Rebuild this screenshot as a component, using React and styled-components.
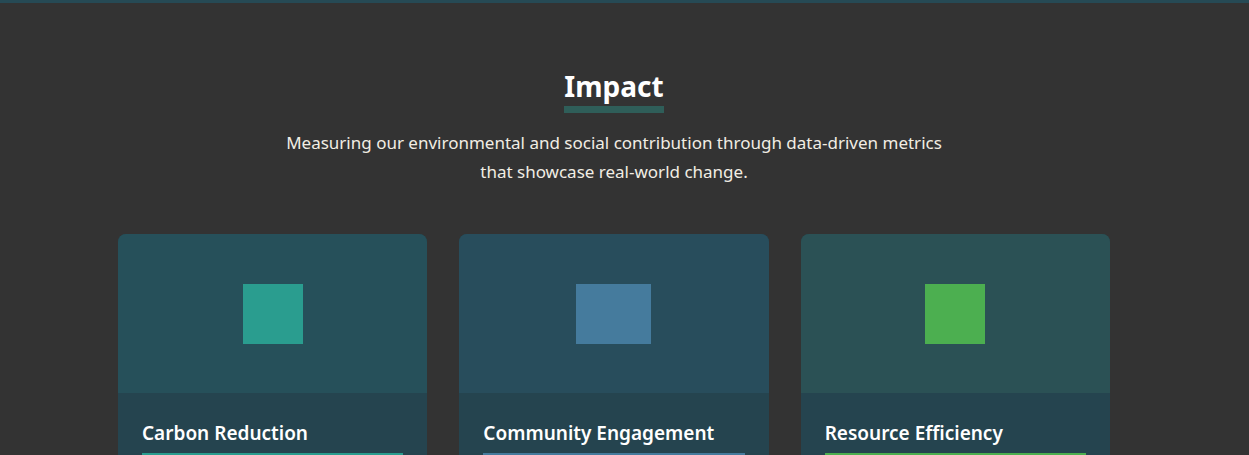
import styled, { createGlobalStyle } from 'styled-components'

const GlobalStyle = createGlobalStyle`
  html, body {
    margin: 0;
    padding: 0;
    background: #333333;
  }
  body {
    font-family: 'Noto Sans', 'Open Sans', sans-serif;
    color: #ffffff;
  }
`

const colors = {
  teal: '#2a9d8f',
  blue: '#457b9d',
  green: '#4caf50',
}

const Page = styled.main`
  min-height: 900px;
  border-top: 3px solid #264a55;
  padding: 0 21px 0 0;
`

const Section = styled.section`
  max-width: 992px;
  margin: 0 auto;
  padding-top: 64px;
  display: flex;
  flex-direction: column;
  align-items: center;
`

const Title = styled.h2`
  margin: 0;
  font-size: 28px;
  font-weight: 700;
  line-height: 38px;
  color: #ffffff;
  padding-bottom: 1px;
  border-bottom: 7px solid #2f5e59;
`

const Lead = styled.p`
  margin: 15px 0 0;
  max-width: 680px;
  text-align: center;
  font-size: 17px;
  line-height: 29px;
  color: #f1ede4;
`

const Grid = styled.div`
  align-self: stretch;
  display: grid;
  grid-template-columns: repeat(3, 1fr);
  gap: 32px;
  margin-top: 48px;
`

const Card = styled.article`
  border-radius: 8px;
  overflow: hidden;
  background: #25444f;
`

const Visual = styled.div`
  height: 159px;
  background: ${(p) => p.$bg};
  display: flex;
  align-items: center;
  justify-content: center;
`

const Mark = styled.div`
  width: ${(p) => p.$w}px;
  height: 60px;
  background: ${(p) => p.$color};
`

const Body = styled.div`
  padding: 26px 24px 24px;
`

const CardTitle = styled.h3`
  margin: 0;
  font-size: 19px;
  font-weight: 600;
  line-height: 28px;
  color: #ffffff;
  padding-bottom: 6px;
  border-bottom: 3px solid ${(p) => p.$color};
`

const cards = [
  { title: 'Carbon Reduction', color: colors.teal, bg: '#26505a', w: 60 },
  { title: 'Community Engagement', color: colors.blue, bg: '#284d5c', w: 75 },
  { title: 'Resource Efficiency', color: colors.green, bg: '#2b5155', w: 60 },
]

export default function App() {
  return (
    <>
      <GlobalStyle />
      <Page>
        <Section>
          <Title>Impact</Title>
          <Lead>
            Measuring our environmental and social contribution through data-driven metrics
            that showcase real-world change.
          </Lead>
          <Grid>
            {cards.map((c) => (
              <Card key={c.title}>
                <Visual $bg={c.bg}>
                  <Mark $color={c.color} $w={c.w} />
                </Visual>
                <Body>
                  <CardTitle $color={c.color}>{c.title}</CardTitle>
                </Body>
              </Card>
            ))}
          </Grid>
        </Section>
      </Page>
    </>
  )
}
